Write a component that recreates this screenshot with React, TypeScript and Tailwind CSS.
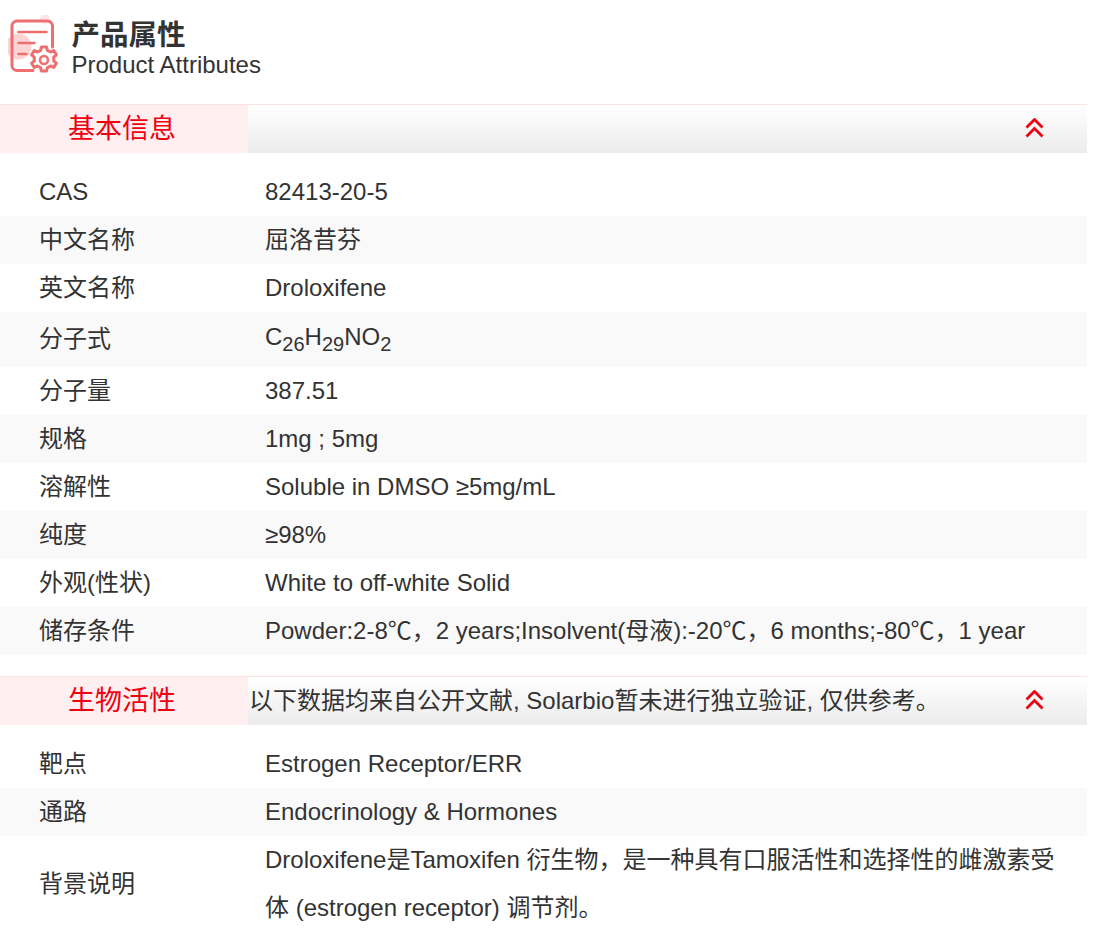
import React from 'react';

const FONT = "font-['Liberation_Sans','Noto_Sans_CJK_SC',sans-serif]";

type Row = { label: string; value: React.ReactNode; tall?: boolean };

const basicRows: Row[] = [
  { label: 'CAS', value: '82413-20-5' },
  { label: '中文名称', value: '屈洛昔芬' },
  { label: '英文名称', value: 'Droloxifene' },
  {
    label: '分子式',
    value: (
      <>
        C<sub className="text-[20px] -bottom-[6px]">26</sub>H<sub className="text-[20px] -bottom-[6px]">29</sub>NO
        <sub className="text-[20px] -bottom-[6px]">2</sub>
      </>
    ),
    tall: true,
  },
  { label: '分子量', value: '387.51' },
  { label: '规格', value: '1mg ; 5mg' },
  { label: '溶解性', value: 'Soluble in DMSO ≥5mg/mL' },
  { label: '纯度', value: '≥98%' },
  { label: '外观(性状)', value: 'White to off-white Solid' },
  { label: '储存条件', value: 'Powder:2-8℃，2 years;Insolvent(母液):-20℃，6 months;-80℃，1 year' },
];

const bioRows: Row[] = [
  { label: '靶点', value: 'Estrogen Receptor/ERR' },
  { label: '通路', value: 'Endocrinology & Hormones' },
];

const AttributesIcon = () => (
  <svg width="60" height="70" viewBox="0 0 60 70" fill="none" className="shrink-0 blur-[0.4px]">
    <circle cx="10.500" cy="31.500" r="13" fill="#fbd5d6" />
    <circle cx="37" cy="4" r="5" fill="#fde6e7" />
    <path
      d="M25 55.500H9a5 5 0 0 1-5-5V11a5 5 0 0 1 5-5h30.500a5 5 0 0 1 5 5v21"
      stroke="#ee6f70"
      strokeWidth="3"
      strokeLinecap="round"
    />
    <path d="M10.500 17h28M10.500 28h16M10.500 39h8" stroke="#ee6f70" strokeWidth="2.600" strokeLinecap="round" />
    <g transform="translate(-5.500 0)">
      <path
        d="M39 32l5 0 1 3.500 3 1.500 3.300-1.400 2.600 4.200-2.700 2.400v3.600l2.700 2.400-2.600 4.200-3.300-1.400-3 1.500-1 3.500h-5l-1-3.500-3-1.500-3.300 1.400-2.600-4.200 2.700-2.400v-3.600l-2.700-2.400 2.600-4.200 3.300 1.400 3-1.500z"
        stroke="#ee6f70"
        strokeWidth="3"
        strokeLinejoin="round"
      />
      <circle cx="41.500" cy="45" r="4" stroke="#ee6f70" strokeWidth="2.600" />
    </g>
  </svg>
);

const Chevrons = () => (
  <svg width="20" height="20" viewBox="0 0 20 20" fill="none" className="mb-[2px] shrink-0">
    <path d="M1.500 9.500L9.500 1.500l8 8M1.500 18.500L9.500 10.500l8 8" stroke="#f0000f" strokeWidth="2.800" />
  </svg>
);

const SectionHeader = ({ title, note }: { title: string; note?: string }) => (
  <div className="flex h-[49px] border-t border-[#fde3e0]">
    <div className="flex w-[248px] shrink-0 items-center justify-center bg-[#ffeff0] pr-[4px] text-[27px] text-[#f0000f]">{title}</div>
    <div className="flex flex-1 items-center justify-between bg-gradient-to-b from-white to-[#ececec] pl-[1px] pr-[42px]">
      <span className="text-[24px] leading-none text-[#333]">{note}</span>
      <Chevrons />
    </div>
  </div>
);

const AttrRow = ({ row, shaded }: { row: Row; shaded: boolean }) => (
  <div className={`flex items-center pl-[39px] text-[24px] text-[#333] ${row.tall ? 'h-[55px] pb-[2px]' : 'h-[48px]'} ${shaded ? 'bg-[#f9f9f9]' : ''}`}>
    <div className="w-[226px] shrink-0 whitespace-nowrap">{row.label}</div>
    <div className={`whitespace-nowrap ${row.tall ? 'pb-[4px]' : ''}`}>{row.value}</div>
  </div>
);

export default function App() {
  return (
    <div className={`${FONT} w-[1087px] bg-white`}>
      {/* Title */}
      <div className="flex h-[104px] items-start gap-[3.5px] pl-[8px] pt-[15px]">
        <AttributesIcon />
        <div className="mt-[4px] text-[#333]">
          <h2 className="text-[28.5px] font-bold leading-[32px]">产品属性</h2>
          <p className="text-[24px] leading-[27px]">Product Attributes</p>
        </div>
      </div>

      <SectionHeader title="基本信息" />
      <div className="pt-[15px]">
        {basicRows.map((row, i) => (
          <AttrRow key={row.label} row={row} shaded={i % 2 === 1} />
        ))}
      </div>

      <div className="mt-[21px]">
        <SectionHeader title="生物活性" note="以下数据均来自公开文献, Solarbio暂未进行独立验证, 仅供参考。" />
      </div>
      <div className="pt-[15px]">
        {bioRows.map((row, i) => (
          <AttrRow key={row.label} row={row} shaded={i % 2 === 1} />
        ))}
        <div className="flex items-center pl-[39px] text-[24px] text-[#333]">
          <div className="w-[226px] shrink-0">背景说明</div>
          <div className="flex-1 pr-[30px] leading-[48px]">
            Droloxifene是Tamoxifen 衍生物，是一种具有口服活性和选择性的雌激素受体 (estrogen receptor) 调节剂。
          </div>
        </div>
      </div>
    </div>
  );
}
